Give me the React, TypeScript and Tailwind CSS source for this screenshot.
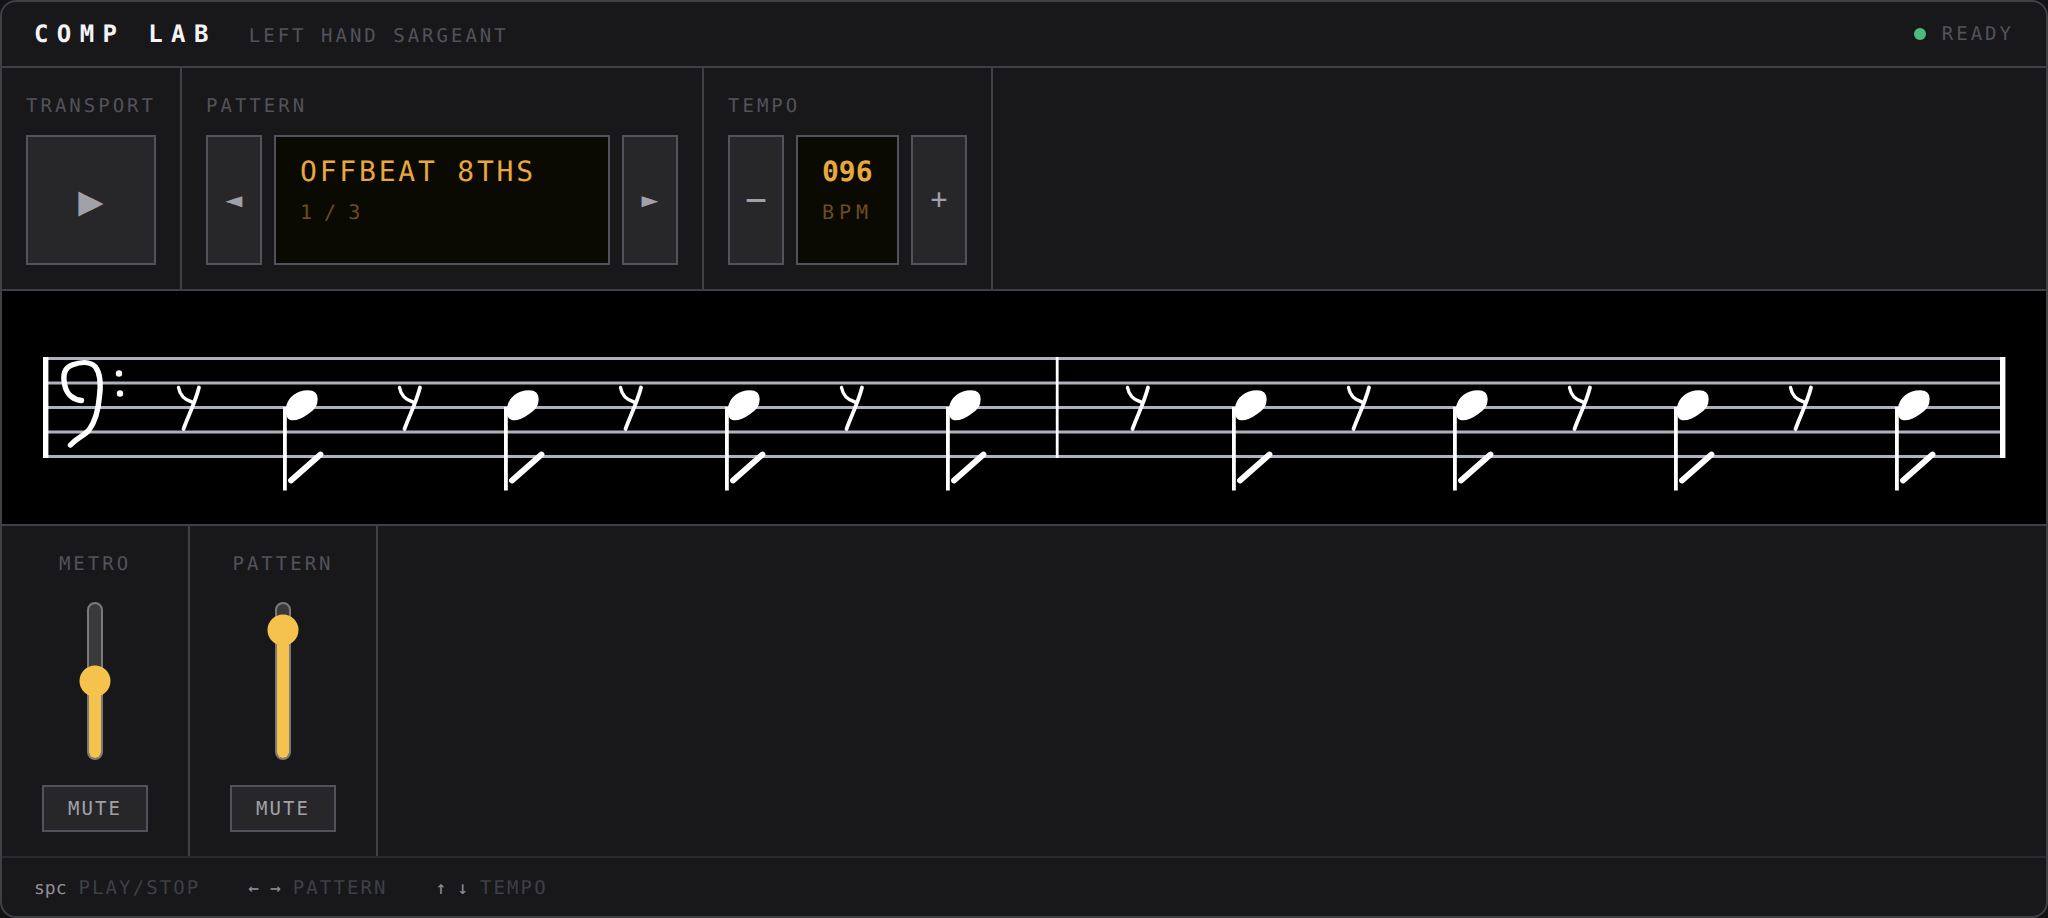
import * as React from 'react';

const REST_AND_NOTE_OFFSETS = [0, 221, 442, 663, 949, 1170, 1391, 1612];
const STAFF_LINES = [358.5, 383, 407.5, 432, 456.5];

function PanelLabel({ children }: { children: React.ReactNode }) {
  return <div className="mb-[15px] pt-px text-[19px] leading-[27px] tracking-[0.158em] text-[#52525a]">{children}</div>;
}

function StepButton({ children, className }: { children: React.ReactNode; className: string }) {
  return (
    <button className={`flex h-[130px] w-14 items-center justify-center border-2 border-[#52525b] bg-[#27272a] text-[#a1a1aa] ${className}`}>
      {children}
    </button>
  );
}

function Staff() {
  return (
    // viewBox matches page coordinates so the numbers read against the layout
    <svg className="block h-[233px] w-[2044px]" viewBox="2 291 2044 233" fill="none">
      {STAFF_LINES.map((y) => (
        <line key={y} x1="43" x2="2005" y1={y} y2={y} stroke="#aeb2bd" strokeWidth="2.9" />
      ))}
      <rect x="43" y="357" width="5.4" height="101" fill="#fff" />
      <rect x="2000" y="357" width="5.4" height="101" fill="#fff" />
      <rect x="1055.8" y="357" width="2.8" height="101" fill="#fff" />

      {/* Bass clef */}
      <path
        d="M81.5 400.5C74 400 67 395 65 386C62.5 376 64 368 72 365C80 362 90 361 95.5 367C100 373 101 384 99.5 396C98.5 408 96.5 420 89 430C85 435 78 437 70.5 445"
        stroke="#fff"
        strokeWidth="5.4"
        strokeLinecap="round"
      />
      <circle cx="119" cy="373.5" r="3.2" fill="#fff" />
      <circle cx="120" cy="393.5" r="3.2" fill="#fff" />

      {REST_AND_NOTE_OFFSETS.map((dx) => (
        <g key={dx} transform={`translate(${dx} 0)`}>
          {/* Eighth rest */}
          <path d="M178.5 387.5C180 396 185 400 192 402" stroke="#fff" strokeWidth="3.4" strokeLinecap="round" />
          <path d="M199 387.5C195 403 189 414 183.5 429" stroke="#fff" strokeWidth="3.8" strokeLinecap="round" />
          {/* Eighth note */}
          <rect x="283" y="407" width="3.8" height="83.5" fill="#fff" />
          <path
            d="M287 408C289 398 297 391.5 308 391.5C313 391.5 316.5 394 316.5 399C316.5 406 313.5 409 307.5 413C302 417 296 419.5 291.5 419C288 418.5 286.3 414 287 408Z"
            fill="#fff"
            stroke="#fff"
            strokeWidth="2.4"
            strokeLinejoin="round"
          />
          <path d="M291 480.5L320.5 454.5" stroke="#fff" strokeWidth="5.8" strokeLinecap="round" />
        </g>
      ))}
    </svg>
  );
}

function Channel({ name, level }: { name: string; level: number }) {
  const center = 15.5 + level * 127;
  return (
    <div className="flex w-[188px] flex-col items-center border-r-2 border-[#3f3f46] pt-[25px]">
      <div className="text-[19px] leading-[27px] tracking-[0.158em] text-[#52525a]">{name}</div>
      <div className="relative mt-6 h-[158px] w-4 overflow-visible rounded-lg border-2 border-[#7a7a7a] bg-[#3a3a3a]">
        <div className="absolute bottom-0 left-0 right-0 rounded-b-md bg-[#f4c24d]" style={{ height: center - 2 }} />
        <div
          className="absolute left-1/2 h-[31px] w-[31px] -translate-x-1/2 translate-y-1/2 rounded-full bg-[#f4c24d]"
          style={{ bottom: center - 2 }}
        />
      </div>
      <button className="mt-[25px] h-[47px] w-[106px] border-2 border-[#52525b] bg-[#27272a] text-[19px] leading-[27px] tracking-[0.11em] text-[#a1a1a8]">
        MUTE
      </button>
    </div>
  );
}

function Hint({ keys, label }: { keys: string; label: string }) {
  return (
    <div className="flex items-center gap-3">
      <span className="text-[#8f8f96]">{keys}</span>
      <span className="text-[19px] tracking-[0.11em] text-[#3f3f46]">{label}</span>
    </div>
  );
}

export default function App() {
  return (
    <div className="h-screen w-screen bg-[#131316]">
      <div className="flex h-full w-full flex-col overflow-hidden rounded-2xl border-2 border-[#3f3f46] bg-[#18181b] font-['DejaVu_Sans_Mono',monospace] [text-rendering:geometricPrecision]">
        {/* Header */}
        <header className="flex h-[66px] shrink-0 items-center justify-between border-b-2 border-[#3f3f46] px-8">
          <div className="flex items-baseline gap-8">
            <span className="text-[24px] font-bold tracking-[0.35em] text-[#f4f4f5]">COMP LAB</span>
            <span className="text-[19px] tracking-[0.158em] text-[#52525a]">LEFT HAND SARGEANT</span>
          </div>
          <div className="flex items-center gap-4">
            <span className="h-3 w-3 rounded-full bg-[#4cbb83]" />
            <span className="text-[19px] tracking-[0.158em] text-[#52525a]">READY</span>
          </div>
        </header>

        {/* Toolbar */}
        <div className="flex h-[223px] shrink-0 border-b-2 border-[#3f3f46]">
          <section className="border-r-2 border-[#3f3f46] p-6">
            <PanelLabel>TRANSPORT</PanelLabel>
            <button className="flex h-[130px] w-[130px] items-center justify-center border-2 border-[#52525b] bg-[#27272a] text-[42px] text-[#a1a1aa]">
              ▶
            </button>
          </section>

          <section className="border-r-2 border-[#3f3f46] p-6">
            <PanelLabel>PATTERN</PanelLabel>
            <div className="flex gap-3">
              <StepButton className="text-[28px]">◄</StepButton>
              <div className="h-[130px] w-[336px] border-2 border-[#52525b] bg-[#0a0a03] px-6 pt-[14px]">
                <div className="text-[28px] leading-[42px] tracking-[0.1em] text-[#e8a73f]">OFFBEAT 8THS</div>
                <div className="mt-1.5 text-[20px] leading-[27px] text-[#6b4d1f]">1 / 3</div>
              </div>
              <StepButton className="text-[28px]">►</StepButton>
            </div>
          </section>

          <section className="border-r-2 border-[#3f3f46] p-6">
            <PanelLabel>TEMPO</PanelLabel>
            <div className="flex gap-3">
              <StepButton className="text-[36px]">−</StepButton>
              <div className="h-[130px] border-2 border-[#52525b] bg-[#0a0a03] px-6 pt-[14px]">
                <div className="text-[28px] font-bold leading-[42px] text-[#e8a73f]">096</div>
                <div className="mt-1.5 w-[51px] text-[20px] leading-[27px] tracking-[0.25em] text-[#6b4d1f]">BPM</div>
              </div>
              <StepButton className="text-[28px]">+</StepButton>
            </div>
          </section>
        </div>

        {/* Notation */}
        <div className="h-[233px] shrink-0 bg-black">
          <Staff />
        </div>

        {/* Mixer */}
        <div className="flex min-h-0 flex-1 border-t-2 border-[#3f3f46]">
          <Channel name="METRO" level={0.5} />
          <Channel name="PATTERN" level={0.9} />
        </div>

        {/* Key hints */}
        <footer className="flex h-[60px] shrink-0 items-center gap-12 border-t-2 border-[#2a2a2e] px-8 pt-[3px] text-[18px]">
          <Hint keys="spc" label="PLAY/STOP" />
          <Hint keys="← →" label="PATTERN" />
          <Hint keys="↑ ↓" label="TEMPO" />
        </footer>
      </div>
    </div>
  );
}
